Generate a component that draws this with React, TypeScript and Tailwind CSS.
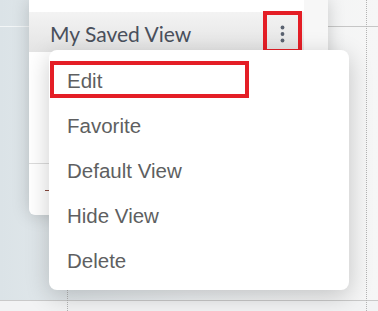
const MENU_ITEMS = ["Edit", "Favorite", "Default View", "Hide View", "Delete"];

export default function App() {
  return (
    <div className="relative h-[311px] w-[378px] overflow-hidden bg-gradient-to-r from-[#dbe3e7] via-[#eef1f3] to-[#f6f6f6] [font-family:'Liberation_Sans',Arial,sans-serif]">
      <BackdropLines />

      <div className="relative pl-[29px]">
        <SavedViewsPanel />
      </div>

      <ViewMenu />
    </div>
  );
}

function BackdropLines() {
  return (
    <>
      <div className="absolute left-0 top-[26px] h-px w-[29px] bg-[#f3f6f7]" />
      <div className="absolute left-[328px] top-[26px] h-px w-[50px] bg-[#c6c6c6]" />
      <div className="absolute left-0 top-[300px] h-px w-full bg-[#c9c9c9]" />
      <div className="absolute left-0 top-[301px] h-[10px] w-full bg-[#f2f3f4]" />
      <div className="absolute left-[366px] top-0 h-full border-l border-dotted border-[#b3b3b3]" />
      <div className="absolute left-[67px] top-[290px] h-[21px] border-l border-dotted border-[#b3b3b3]" />
    </>
  );
}

function SavedViewsPanel() {
  return (
    <div className="flex h-[215px] w-[299px] overflow-hidden rounded-b-[6px] bg-white shadow-[0_0_18px_rgba(0,0,0,0.18)]">
      <div className="flex w-[275px] flex-col">
        <div className="h-[12px]" />
        <div className="relative flex h-[40px] items-center bg-gradient-to-b from-[#f3f3f3] to-[#e4e4e4] pl-[21px] pt-[4px]">
          <span className="[font-family:Lato,sans-serif] text-[21px] text-[#4a505c]">My Saved View</span>
          <KebabButton />
        </div>
        <div className="h-[111px]" />
        <div className="h-px bg-[#dcdcdc]" />
        <div className="mt-[26px] ml-[16px] h-px w-[6px] bg-[#8b4a3f]" />
      </div>
      <div className="w-[24px] bg-[#f7f7f7]" />
    </div>
  );
}

function KebabButton() {
  return (
    <div className="absolute right-[2px] top-[-1px] flex h-[42px] w-[39px] items-center justify-center border-[4px] border-[#e41e26] pt-[3px]">
      <svg width="5" height="18" viewBox="0 0 5 18">
        <circle cx="2.5" cy="2.5" r="1.9" fill="#5a6270" />
        <circle cx="2.5" cy="9" r="1.9" fill="#5a6270" />
        <circle cx="2.5" cy="15.5" r="1.9" fill="#5a6270" />
      </svg>
    </div>
  );
}

function ViewMenu() {
  return (
    <div className="absolute left-[49px] top-[50px] h-[240px] w-[300px] rounded-[8px] bg-white pt-[8px] shadow-[0_6px_24px_rgba(0,0,0,0.2)]">
      {MENU_ITEMS.map((item) => (
        <div key={item} className="h-[45px] pl-[18px] text-[20.5px] leading-[45px] text-[#5e5f61]">
          {item}
        </div>
      ))}
      <div className="absolute left-[1px] top-[11px] h-[37px] w-[199px] border-[4px] border-[#e41e26]" />
    </div>
  );
}
